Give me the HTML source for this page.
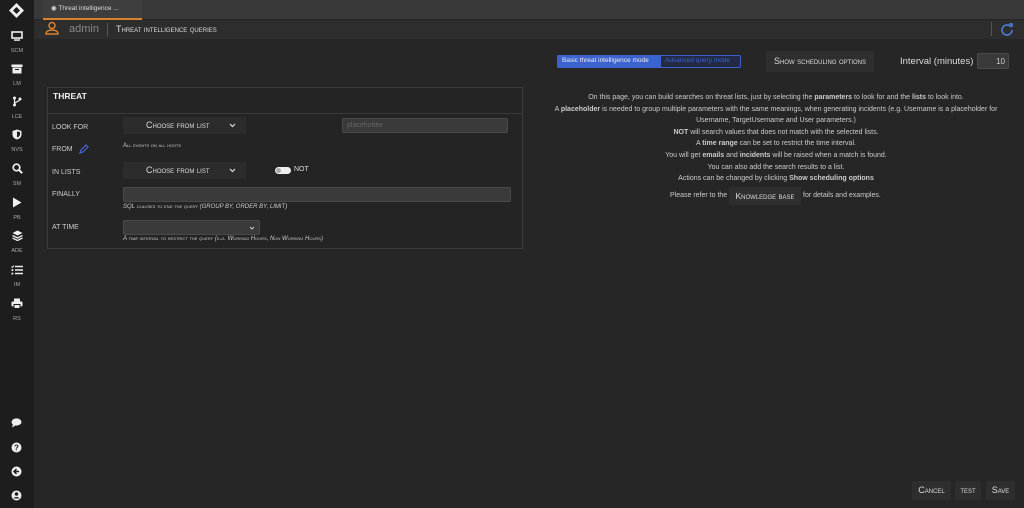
<!DOCTYPE html>
<html><head><meta charset="utf-8"><style>
*{box-sizing:border-box;margin:0;padding:0}
body{width:1024px;height:508px;background:#262626;font-family:"Liberation Sans",sans-serif;color:#ddd;position:relative;overflow:hidden}
.abs{position:absolute}
.sb{left:0;top:0;width:34px;height:508px;background:#1d1d1d}
.ic{position:absolute;left:0;width:34px;text-align:center;color:#e8e8e8}
.ic span{display:block;font-size:5.5px;color:#aaa;margin-top:2px}
.sc{font-variant:small-caps}
.btn{background:#2e2e2e;color:#ddd;font-size:10px;text-align:center;font-variant:small-caps}
.lbl{position:absolute;left:52px;font-size:7px;color:#ccc}
.dd{position:absolute;left:123px;width:123px;height:17px;background:#2c2c2c;font-size:9px;font-variant:small-caps;color:#ddd;line-height:17px;padding-left:23px}
.dd svg{position:absolute;right:10px;top:6px}
.hint{position:absolute;left:123px;font-size:6px;font-style:italic;color:#ccc;font-variant:small-caps}
.info{position:absolute;left:476px;width:600px;text-align:center;font-size:7px;color:#ccc;white-space:nowrap}
.info div{height:11.6px;line-height:11.6px}
</style></head><body>
<div class="abs sb"></div>
<div class="abs" style="left:34px;top:0;width:990px;height:19px;background:#393939"></div>
<div class="abs" style="left:43px;top:0;width:99px;height:19px;background:#3e3e3e;font-size:6.5px;color:#ddd;padding:4px 0 0 8px">&#9673; Threat intelligence ...</div>
<div class="abs" style="left:43px;top:18px;width:99px;height:2px;background:#d9822b"></div>
<div class="abs" style="left:34px;top:20px;width:990px;height:19px;background:#2d2d2d"></div>
<svg class="abs" style="left:45px;top:21px" width="14" height="15" viewBox="0 0 14 15"><circle cx="7" cy="4.5" r="3" fill="none" stroke="#d9822b" stroke-width="1.5"/><path d="M1 13c0-3 3-4 6-4s6 1 6 4z" fill="none" stroke="#d9822b" stroke-width="1.5"/></svg>
<div class="abs" style="left:69px;top:23px;font-size:11px;color:#888">admin</div>
<div class="abs" style="left:107px;top:23px;width:1px;height:13px;background:#555"></div>
<div class="abs sc" style="left:116px;top:24px;font-size:9px;color:#ddd">Threat intelligence queries</div>
<div class="abs" style="left:991px;top:22px;width:1px;height:14px;background:#555"></div>
<svg class="abs" style="left:1000px;top:22px" width="14" height="14" viewBox="0 0 14 14"><path d="M11 5A5 5 0 1 0 12 8" fill="none" stroke="#4a7fe0" stroke-width="1.6"/><path d="M9 2l3 0 0 3" fill="none" stroke="#4a7fe0" stroke-width="1.6"/></svg>

<svg class="abs" style="left:8px;top:2px" width="17" height="17" viewBox="0 0 17 17"><path d="M8.5 1L16 8.5 8.5 16 1 8.5z" fill="#eee"/><path d="M8.5 5L12 8.5 8.5 12 5 8.5z" fill="#1d1d1d"/></svg>
<div class="ic" style="top:28px"><svg width="12" height="10" viewBox="0 0 12 10"><rect x="1" y="1" width="10" height="6" fill="none" stroke="#eee" stroke-width="1.6"/><rect x="3" y="8.3" width="6" height="1.5" fill="#eee"/></svg><span>SCM</span></div>
<div class="ic" style="top:61px"><svg width="12" height="10" viewBox="0 0 12 10"><rect x="0.5" y="0.5" width="11" height="2.5" fill="#eee"/><rect x="1.5" y="3.5" width="9" height="6" fill="#eee"/><rect x="4" y="5" width="4" height="1" fill="#1d1d1d"/></svg><span>LM</span></div>
<div class="ic" style="top:94px"><svg width="10" height="11" viewBox="0 0 10 11"><circle cx="2.5" cy="2" r="1.5" fill="#eee"/><circle cx="2.5" cy="9" r="1.5" fill="#eee"/><circle cx="8" cy="3" r="1.5" fill="#eee"/><path d="M2.5 2v7M8 3c0 3-5 2-5.5 5" stroke="#eee" fill="none" stroke-width="1.2"/></svg><span>LCE</span></div>
<div class="ic" style="top:127px"><svg width="10" height="11" viewBox="0 0 10 11"><path d="M5 .5L9.5 2v3.5c0 3-2.5 4.5-4.5 5C3 10 .5 8.5.5 5.5V2z" fill="#eee"/><path d="M5 2.5v6c1.5-.5 3-1.5 3-3.5V3z" fill="#1d1d1d"/></svg><span>NVS</span></div>
<div class="ic" style="top:161px"><svg width="11" height="11" viewBox="0 0 11 11"><circle cx="4.5" cy="4.5" r="3.3" fill="none" stroke="#eee" stroke-width="1.7"/><path d="M7 7l3.2 3.2" stroke="#eee" stroke-width="2"/></svg><span>SM</span></div>
<div class="ic" style="top:195px"><svg width="10" height="11" viewBox="0 0 10 11"><path d="M1 .5L9.5 5.5 1 10.5z" fill="#eee"/></svg><span>PB</span></div>
<div class="ic" style="top:228px"><svg width="11" height="11" viewBox="0 0 11 11"><path d="M5.5 .5L10.5 3 5.5 5.5.5 3z" fill="#eee"/><path d="M.5 5.5l5 2.5 5-2.5M.5 8l5 2.5 5-2.5" fill="none" stroke="#eee" stroke-width="1.3"/></svg><span>ADE</span></div>
<div class="ic" style="top:262px"><svg width="12" height="10" viewBox="0 0 12 10"><path d="M4 1.5h8M4 5h8M4 8.5h8" stroke="#eee" stroke-width="1.5"/><path d="M.5 1.5l1 1 1.5-2" stroke="#eee" fill="none"/><rect x=".5" y="4.2" width="1.8" height="1.8" fill="#eee"/><rect x=".5" y="7.7" width="1.8" height="1.8" fill="#eee"/></svg><span>IM</span></div>
<div class="ic" style="top:296px"><svg width="12" height="11" viewBox="0 0 12 11"><rect x="3" y="0.5" width="6" height="3" fill="#eee"/><rect x=".5" y="3.5" width="11" height="5" rx="1" fill="#eee"/><rect x="3" y="6.5" width="6" height="4" fill="#eee" stroke="#1d1d1d"/></svg><span>RS</span></div>
<svg class="abs" style="left:11px;top:418px" width="11" height="10" viewBox="0 0 11 10"><ellipse cx="5.5" cy="4" rx="5" ry="3.6" fill="#eee"/><path d="M2 6L1 9.5 4.5 7.5z" fill="#eee"/></svg>
<svg class="abs" style="left:11px;top:442px" width="11" height="11" viewBox="0 0 11 11"><circle cx="5.5" cy="5.5" r="5" fill="#eee"/><text x="5.5" y="8.5" font-size="8" font-weight="bold" text-anchor="middle" fill="#1d1d1d" font-family="Liberation Sans">?</text></svg>
<svg class="abs" style="left:11px;top:466px" width="11" height="11" viewBox="0 0 11 11"><circle cx="5.5" cy="5.5" r="5" fill="#eee"/><path d="M8 5.5H3.5M5.5 3L3 5.5 5.5 8" stroke="#1d1d1d" stroke-width="1.5" fill="none"/></svg>
<svg class="abs" style="left:11px;top:490px" width="11" height="11" viewBox="0 0 11 11"><circle cx="5.5" cy="5.5" r="5" fill="#eee"/><circle cx="5.5" cy="4" r="1.8" fill="#1d1d1d"/><path d="M2.5 8.5c1-2 5-2 6 0" fill="#1d1d1d"/></svg>

<div class="abs" style="left:47px;top:87px;width:476px;height:162px;border:1px solid #3a3a3a;background:#242424"></div>
<div class="abs" style="left:47px;top:113px;width:476px;height:1px;background:#3a3a3a"></div>
<div class="abs" style="left:53px;top:91px;font-size:8.5px;font-weight:bold;color:#eee">THREAT</div>
<div class="lbl" style="top:124px">LOOK FOR</div>
<div class="lbl" style="top:146px">FROM</div>
<svg class="abs" style="left:79px;top:144px" width="10" height="10" viewBox="0 0 10 10"><path d="M1 9l1-3 5-5 2 2-5 5z" fill="none" stroke="#4a62d8" stroke-width="1.2"/></svg>
<div class="lbl" style="top:169px">IN LISTS</div>
<div class="lbl" style="top:191px">FINALLY</div>
<div class="lbl" style="top:224px">AT TIME</div>
<div class="dd" style="top:117px">Choose from list<svg width="7" height="5" viewBox="0 0 7 5"><path d="M1 1l2.5 2.5L6 1" stroke="#ddd" stroke-width="1.2" fill="none"/></svg></div>
<div class="abs" style="left:342px;top:118px;width:166px;height:15px;background:#3a3a3a;border:1px solid #4a4a4a;border-radius:2px;font-size:7px;color:#666;padding:3px 0 0 4px">placeholder</div>
<div class="hint" style="top:143px;font-style:normal">All events on all hosts</div>
<div class="dd" style="top:162px">Choose from list<svg width="7" height="5" viewBox="0 0 7 5"><path d="M1 1l2.5 2.5L6 1" stroke="#ddd" stroke-width="1.2" fill="none"/></svg></div>
<div class="abs" style="left:275px;top:167px;width:16px;height:7px;border-radius:4px;background:#eee"></div>
<div class="abs" style="left:276px;top:168px;width:5px;height:5px;border-radius:3px;background:#aaa"></div>
<div class="abs" style="left:294px;top:166px;font-size:7px;color:#ddd">NOT</div>
<div class="abs" style="left:123px;top:187px;width:388px;height:15px;background:#3a3a3a;border:1px solid #4a4a4a;border-radius:2px"></div>
<div class="hint" style="top:204px">SQL clauses to end the query (GROUP BY, ORDER BY, LIMIT)</div>
<div class="abs" style="left:123px;top:220px;width:137px;height:15px;background:#3a3a3a;border:1px solid #4a4a4a;border-radius:2px"><svg style="position:absolute;right:4px;top:5px" width="6" height="4" viewBox="0 0 6 4"><path d="M1 1l2 2 2-2" stroke="#ccc" fill="none"/></svg></div>
<div class="hint" style="top:236px">A time interval to restrict the query (e.g. Working Hours, Non Working Hours)</div>

<div class="abs" style="left:557px;top:55px;width:184px;height:13px;border:1px solid #3b5fcf;border-radius:2px;background:#232a45"></div>
<div class="abs" style="left:557px;top:55px;width:104px;height:13px;background:#3b63d0;border-radius:2px 0 0 2px;font-size:6.5px;color:#eee;padding:2px 0 0 5px">Basic threat intelligence mode</div>
<div class="abs" style="left:665px;top:57px;font-size:6.5px;color:#3b5fcf">Advanced query mode</div>
<div class="abs btn" style="left:766px;top:51px;width:108px;height:21px;line-height:21px;font-size:9px">Show scheduling options</div>
<div class="abs" style="left:900px;top:56px;font-size:9.5px;color:#ddd">Interval (minutes)</div>
<div class="abs" style="left:977px;top:53px;width:32px;height:16px;background:#3a3a3a;border:1px solid #4a4a4a;border-radius:2px;font-size:8px;color:#ccc;text-align:right;padding:3px 3px 0 0">10</div>
<div class="info" style="top:92px">
<div>On this page, you can build searches on threat lists, just by selecting the <b>parameters</b> to look for and the <b>lists</b> to look into.</div>
<div>A <b>placeholder</b> is needed to group multiple parameters with the same meanings, when generating incidents (e.g. Username is a placeholder for</div>
<div>Username, TargetUsername and User parameters.)</div>
<div><b>NOT</b> will search values that does not match with the selected lists.</div>
<div>A <b>time range</b> can be set to restrict the time interval.</div>
<div>You will get <b>emails</b> and <b>incidents</b> will be raised when a match is found.</div>
<div>You can also add the search results to a list.</div>
<div>Actions can be changed by clicking <b>Show scheduling options</b></div>
</div>
<div class="abs" style="left:670px;top:192px;font-size:7px;color:#ccc">Please refer to the</div>
<div class="abs btn" style="left:729px;top:187px;width:72px;height:18px;line-height:18px;font-size:8.5px">Knowledge base</div>
<div class="abs" style="left:803px;top:192px;font-size:7px;color:#ccc">for details and examples.</div>

<div class="abs btn" style="left:912px;top:481px;width:39px;height:19px;line-height:19px;font-size:9px">Cancel</div>
<div class="abs btn" style="left:955px;top:481px;width:26px;height:19px;line-height:19px;font-size:8px">test</div>
<div class="abs btn" style="left:986px;top:481px;width:29px;height:19px;line-height:19px;font-size:9px">Save</div>
</body></html>
